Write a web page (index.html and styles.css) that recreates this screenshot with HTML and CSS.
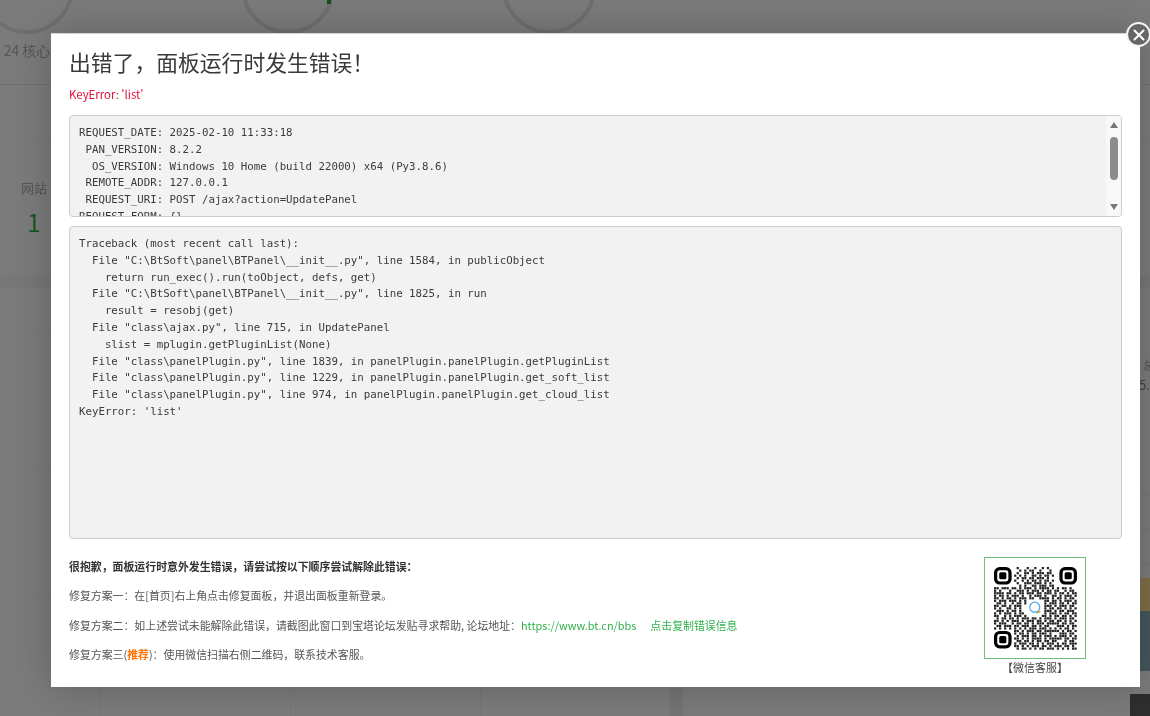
FILE: index.html
```html
<!DOCTYPE html>
<html lang="zh-CN">
<head>
<meta charset="utf-8">
<title>出错了</title>
<link rel="stylesheet" href="styles.css">
</head>
<body>
<div class="page">
  <section class="gauges">
    <div class="gauge"><div class="ring"></div><div class="gauge-label">24 核心</div></div>
    <div class="gauge"><div class="ring"><span class="ring-tick"></span></div></div>
    <div class="gauge"><div class="ring"></div></div>
  </section>
  <section class="band"></section>
  <section class="stats">
    <div class="stat"><div class="stat-name">网站</div><div class="stat-value">1</div></div>
  </section>
  <div class="separator"></div>
  <section class="lower">
    <div class="lower-main">
      <div class="lower-row"></div>
      <div class="lower-row"></div>
      <div class="lower-row"></div>
      <div class="lower-columns">
        <div class="col"></div><div class="col"></div><div class="col"></div><div class="col col-dark"></div>
      </div>
    </div>
    <aside class="lower-side">
      <div class="side-name">总</div>
      <div class="side-value">5.3</div>
      <div class="side-spacer"></div>
      <div class="side-line"></div>
      <div class="side-line"></div>
      <div class="side-line"></div>
      <div class="side-orange"></div>
      <div class="side-teal"></div>
      <div class="side-gap"></div>
      <div class="side-dark"></div>
    </aside>
  </section>
</div>
<div class="overlay"></div>

<div class="modal">
  <h1 class="modal-title">出错了，面板运行时发生错误！</h1>
  <p class="modal-error">KeyError: 'list'</p>
  <div class="code-box code-short">
<pre class="code">REQUEST_DATE: 2025-02-10 11:33:18
 PAN_VERSION: 8.2.2
  OS_VERSION: Windows 10 Home (build 22000) x64 (Py3.8.6)
 REMOTE_ADDR: 127.0.0.1
 REQUEST_URI: POST /ajax?action=UpdatePanel
REQUEST_FORM: {}</pre>
    <div class="scrollbar">
      <span class="arrow arrow-up"></span>
      <span class="thumb"></span>
      <span class="arrow arrow-down"></span>
    </div>
  </div>
  <div class="code-box code-long">
<pre class="code">Traceback (most recent call last):
  File "C:\BtSoft\panel\BTPanel\__init__.py", line 1584, in publicObject
    return run_exec().run(toObject, defs, get)
  File "C:\BtSoft\panel\BTPanel\__init__.py", line 1825, in run
    result = resobj(get)
  File "class\ajax.py", line 715, in UpdatePanel
    slist = mplugin.getPluginList(None)
  File "class\panelPlugin.py", line 1839, in panelPlugin.panelPlugin.getPluginList
  File "class\panelPlugin.py", line 1229, in panelPlugin.panelPlugin.get_soft_list
  File "class\panelPlugin.py", line 974, in panelPlugin.panelPlugin.get_cloud_list
KeyError: 'list'</pre>
  </div>
  <div class="help">
    <div class="help-text">
      <p class="help-line help-lead">很抱歉，面板运行时意外发生错误，请尝试按以下顺序尝试解除此错误：</p>
      <p class="help-line">修复方案一：在[首页]右上角点击修复面板，并退出面板重新登录。</p>
      <p class="help-line">修复方案二：如上述尝试未能解除此错误，请截图此窗口到宝塔论坛发贴寻求帮助, 论坛地址：<a class="link link-url">https://www.bt.cn/bbs</a><a class="link link-copy">点击复制错误信息</a></p>
      <p class="help-line">修复方案三(<span class="tag">推荐</span>)：使用微信扫描右侧二维码，联系技术客服。</p>
    </div>
    <figure class="qr">
      <div class="qr-box">
        <svg class="qr-svg" width="83" height="83" viewBox="0 0 82.5 82.5" aria-hidden="true">
          <g id="qr-modules" fill="#222"></g>
          <g class="finder" transform="translate(0 0)"><rect x="1.600" y="1.600" width="14.3" height="14.3" rx="4" fill="none" stroke="#000" stroke-width="3.2"/><rect x="5.200" y="5.200" width="7.1" height="7.1" rx="1.6" fill="#000"/></g>
          <g class="finder" transform="translate(65 0)"><rect x="1.600" y="1.600" width="14.3" height="14.3" rx="4" fill="none" stroke="#000" stroke-width="3.2"/><rect x="5.200" y="5.200" width="7.1" height="7.1" rx="1.6" fill="#000"/></g>
          <g class="finder" transform="translate(0 63.5)"><rect x="1.600" y="1.600" width="14.3" height="14.3" rx="4" fill="none" stroke="#000" stroke-width="3.2"/><rect x="5.200" y="5.200" width="7.1" height="7.1" rx="1.6" fill="#000"/></g>
          <circle cx="40.5" cy="40" r="5" fill="none" stroke="#5aa9e6" stroke-width="1.3"/>
          <circle cx="45" cy="44.5" r="1.2" fill="#f0a030"/>
          <circle cx="43" cy="45.5" r="1" fill="#6cc070"/>
        </svg>
      </div>
      <figcaption class="qr-caption">【微信客服】</figcaption>
    </figure>
  </div>
  <button class="close" type="button" aria-label="关闭">
    <svg width="12" height="12" viewBox="0 0 12 12"><path d="M1.500 1.500l9 9M10.500 1.500l-9 9" stroke="#fff" stroke-width="2" stroke-linecap="round"/></svg>
  </button>
</div>
<script src="qr.js"></script>
</body>
</html>
```
FILE: styles.css
```css
* { box-sizing: border-box; }
html, body { margin: 0; height: 100%; overflow: hidden; }
body { font-family: "Noto Sans CJK SC", "Noto Sans", sans-serif; background: #f6f6f6; }

/* dimmed page behind the dialog */
.page { height: 716px; overflow: hidden; display: flex; flex-direction: column; background: #f6f6f6; filter: blur(.7px); }
.gauges { height: 85px; flex: none; display: flex; gap: 167px; margin-left: -20px; border-bottom: 1px solid #e0e0e0; }
.gauge { width: 94px; margin-top: -60px; display: flex; flex-direction: column; align-items: center; }
.ring { position: relative; width: 94px; height: 94px; flex: none; border-radius: 50%; border: 4px solid #dedede; }
.ring-tick { position: absolute; right: 0; top: 55px; width: 4px; height: 5px; background: #20a53a; }
.gauge-label { margin-top: 6px; font-size: 14px; line-height: 20px; color: #aaa; white-space: nowrap; }
.band { height: 58px; flex: none; border-bottom: 1px solid #efefef; }
.stats { height: 132px; flex: none; padding: 36px 0 0 21px; }
.stat { width: 26px; text-align: center; }
.stat-name { font-size: 13px; line-height: 18px; color: #aaa; }
.stat-value { margin-top: 12px; font-size: 24px; line-height: 26px; color: #2cad44; }
.separator { height: 13px; flex: none; background: #eeeeee; }
.lower { flex: 1; display: flex; min-height: 0; }
.lower-main { flex: 1; display: flex; flex-direction: column; }
.lower-row { height: 45px; flex: none; }
.lower-row:nth-child(1) { border-bottom: 1px solid #f0f0f0; }
.lower-row:nth-child(2) { height: 134px; border-bottom: 1px solid #f0f0f0; }
.lower-row:nth-child(3) { height: 133px; border-bottom: 1px solid #f0f0f0; }
.lower-columns { margin-top: 88px; flex: 1; display: flex; padding-left: 100px; }
.col { width: 190px; border-left: 1px solid #ececec; }
.col-dark { width: 13px; background: #e8e8e8; border: 0; }
.lower-side { width: 20px; flex: none; overflow: hidden; display: flex; flex-direction: column; background: #f6f6f6; }
.side-name { margin: 68px 0 0 13px; font-size: 12px; line-height: 18px; color: #aaa; white-space: nowrap; }
.side-value { margin: 2px 0 0 9px; font-size: 13px; line-height: 18px; color: #888; white-space: nowrap; }
.side-spacer { height: 66px; flex: none; }
.side-line { height: 35px; flex: none; border-bottom: 1px solid #e8e8e8; }
.side-orange { height: 33px; flex: none; background: #ffdf92; margin-top: 13px; }
.side-teal { height: 60px; flex: none; background: #8aacb8; }
.side-gap { height: 23px; flex: none; }
.side-dark { flex: 1; background: #5c5c5c; }
.overlay { position: fixed; inset: 0; background: rgba(0, 0, 0, .5); }

/* dialog */
.modal { position: absolute; left: 51px; top: 33px; width: 1089px; height: 654px; padding: 0 18px; background: #fff; border-top: 1px solid #d4d4d4; box-shadow: 0 0 36px rgba(0, 0, 0, .22); }
.modal-title { margin: 12px 0 0; font-size: 21.8px; line-height: 32px; font-weight: 400; color: #3a3a3a; }
.modal-error { margin: 7px 0 0; font-size: 11.4px; line-height: 18px; color: #e0103a; }
.code-box { position: relative; overflow: hidden; background: #f2f2f2; border: 1px solid #ccc; border-radius: 4px; }
.code-short { margin-top: 12px; height: 102px; }
.code-long { margin-top: 9px; height: 313px; }
.code { margin: 0; padding: 9px 9px; font-family: "DejaVu Sans Mono", "Liberation Mono", monospace; font-size: 10.76px; line-height: 16.8px; color: #3a3a3a; white-space: pre; }
.scrollbar { position: absolute; right: 0; top: 0; bottom: 0; width: 15px; padding: 6px 3px; display: flex; flex-direction: column; align-items: center; background: #f8f8f8; }
.arrow { width: 0; height: 0; flex: none; border-left: 4.5px solid transparent; border-right: 4.5px solid transparent; }
.arrow-up { border-bottom: 6px solid #777; }
.arrow-down { margin-top: auto; border-top: 6px solid #777; }
.thumb { width: 8px; height: 43px; margin-top: 9px; flex: none; background: #8c8c8c; border-radius: 4px; }

.help { display: flex; justify-content: space-between; margin-top: 13px; }
.help-text { flex: 1; }
.help-line { margin: 0; font-size: 10.9px; line-height: 29.3px; color: #555; white-space: nowrap; }
.help-lead { font-weight: 700; color: #333; }
.link { color: #2fb04a; }
.link-url { margin-right: 14px; }
.tag { color: #ff7300; font-weight: 700; }
.qr { margin: 5px 36px 0 0; width: 102px; }
.qr-box { width: 102px; height: 102px; padding: 9px; border: 1px solid #6cbf7c; }
.qr-svg { display: block; }
.qr-caption { font-size: 11px; line-height: 16px; color: #444; text-align: center; white-space: nowrap; }
.close { position: absolute; right: -11px; top: -12px; width: 25px; height: 25px; padding: 0; display: flex; align-items: center; justify-content: center; background: #666; border: 2.5px solid #f4f4f4; border-radius: 50%; }
```
FILE: qr.js
```js
var head = [
  ".X...X..X..X.X...", "..X.X.XX..X...X..", ".X..XX.X.XXX.XX..", "X.X.X..XX.X.XX.X.",
  ".X.XX.XX.XXX.X...", "X..X.X.XX.X.XX.X.", ".X..XXX.XXX.X.X..", "..X.X..XX.XXX.XX."
];
var body = [
  "XX.XXX.XX.X.XXX.X.XXXX.X.X.XX.X..", "X.X...X..XXX.X.XXX.X.XX.XX..X.XX.",
  "XXXX.XX.X.XX.XXX.XX.XXX.X.XX.X.XX", "X.XX.X.XXX.X..X.XXX.X..XX.X.XXX.X",
  "XX.X.XX.X.XXX.XX..XXXX.X.XX.X.XX.", "X.XXX.XXX.X.X.......XX.XX.X.XXX.X",
  ".XX.X..X.XX.X.......X.XXX.XX.X.XX", "XX.XX.X.XXX.........XXX.X.XXX.XX.",
  "X.X..XX.X.X.........X.XX.XX.X.X.X", ".XXX.X.XX.X.........XXX.X.XX.XXX.",
  "X.X.XXX.X.XX........X.XXX.X.XX.XX", "XX..X.X.XXX.X......XX.X.XX.XX.X.X",
  ".X.XX.XX.X.XXX.XX.X.XXX.X.XXX.XX.", "XX.X.X.XXX.X.XXX.XX.X.XX.XX.X.X.X",
  "X.XXX..X.XX.XX.X.XXX.XXXXX.XX.XX.", ".XX.XXX.XX.XXX.XX.X.XX...XXX.X.XX",
  "X.X.X.X.X.X.X.XXX.XXX.X.X.X.XX.X."
];
var tail = [
  "XX.X.XXX.XX.XXXXXX.X.XX.X", "X.XX.X.XX.XXX.X...XXX.XX.", ".X.XXX.XX.X.XXX.X.XXX.X.X",
  "XX.X.X.XXXX.X.XXXXX.XX.XX", ".XX.XX.X.XX.XX.XX...X.XX.", "X.XXX.XX.X.X.XXX.X.XX.XXX",
  "XX.X.X.XXX.XX.X.XXX.XX.X.", ".X.XX.X.X.XX.XXX.X.X.X.XX"
];
var group = document.getElementById("qr-modules");
var pitch = 2.5;
function draw(rows, firstRow, firstCol) {
  rows.forEach(function (row, r) {
    row.split("").forEach(function (cell, c) {
      if (cell !== "X") return;
      var rect = document.createElementNS("http://www.w3.org/2000/svg", "rect");
      rect.setAttribute("x", (firstCol + c) * pitch);
      rect.setAttribute("y", (firstRow + r) * pitch);
      rect.setAttribute("width", 2.2);
      rect.setAttribute("height", 2.2);
      group.appendChild(rect);
    });
  });
}
draw(head, 0, 8);
draw(body, 8, 0);
draw(tail, 25, 8);
```
